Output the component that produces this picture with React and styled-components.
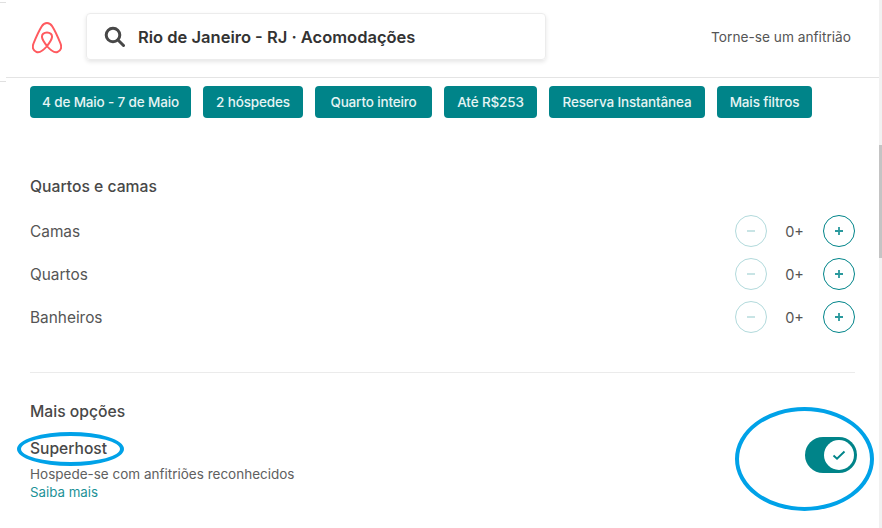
import React from 'react'
import styled, { createGlobalStyle } from 'styled-components'

const Global = createGlobalStyle`
  html, body {
    margin: 0;
    padding: 0;
    background: #fff;
    overflow: hidden;
  }
  body {
    font-family: "Inter", "Noto Sans", sans-serif;
    color: #484848;
  }
`

const Page = styled.div`
  position: relative;
  width: 882px;
  height: 528px;
  overflow: hidden;
  background: #fff;
`

const Header = styled.header`
  display: flex;
  align-items: center;
  height: 78px;
  margin-left: 6px;
  padding: 0 31px 4px 26px;
  box-sizing: border-box;
  border-bottom: 1px solid #e4e4e4;
`

const Logo = styled.svg`
  width: 30px;
  height: 32px;
  margin: 2px 24px 0 0;
  flex: none;
`

const SearchBox = styled.div`
  display: flex;
  align-items: center;
  gap: 13px;
  width: 460px;
  height: 47px;
  padding-left: 17px;
  box-sizing: border-box;
  border: 1px solid #ececec;
  border-radius: 4px;
  box-shadow: 0 2px 4px rgba(0, 0, 0, 0.1);
`

const SearchText = styled.span`
  font-size: 16.5px;
  font-weight: 600;
  color: #333;
  white-space: nowrap;
`

const HostLink = styled.a`
  margin: 1px 0 0 auto;
  font-size: 13.7px;
  color: #555;
`

const Filters = styled.div`
  display: flex;
  gap: 12px;
  padding: 8px 0 0 30px;
`

const Pill = styled.button`
  width: ${p => p.$w}px;
  height: 32px;
  padding: 0;
  border: 0;
  border-radius: 4px;
  background: #008489;
  color: #e6f4f4;
  font: 500 13.5px "Inter", sans-serif;
  letter-spacing: -0.15px;
  white-space: nowrap;
`

const Panel = styled.main`
  padding: 60px 27px 0 30px;
`

const SectionTitle = styled.h2`
  margin: 0;
  font-size: 15.7px;
  line-height: 18px;
  font-weight: 500;
  color: #484848;
`

const Rows = styled.div`
  display: flex;
  flex-direction: column;
  gap: 11px;
  margin-top: 19px;
  padding-bottom: 39px;
  border-bottom: 1px solid #ebebeb;
`

const Row = styled.div`
  display: flex;
  align-items: center;
  justify-content: space-between;
  height: 32px;
  font-size: 15.4px;
  color: #555;
`

const Stepper = styled.div`
  display: flex;
  align-items: center;
  width: 120px;
`

const RoundButton = styled.span`
  display: flex;
  align-items: center;
  justify-content: center;
  width: 32px;
  height: 32px;
  box-sizing: border-box;
  border-radius: 50%;
  border: 1px solid ${p => (p.$off ? '#b2dadc' : '#008489')};
  color: ${p => (p.$off ? '#b2dadc' : '#2a999d')};
`

const Count = styled.span`
  flex: 1;
  padding: 1px 1px 0 0;
  text-align: center;
  font-size: 14.5px;
  color: #555;
`

const OptionsTitle = styled(SectionTitle)`
  margin-top: 30px;
`

const Option = styled.div`
  display: flex;
  align-items: flex-start;
  justify-content: space-between;
  margin-top: 18px;
`

const OptionText = styled.div`
  display: flex;
  flex-direction: column;
`

const OptionName = styled.span`
  font-size: 15.6px;
  line-height: 20px;
  font-weight: 500;
  color: #484848;
`

const OptionHint = styled.span`
  margin-top: 6px;
  font-size: 13.5px;
  line-height: 18px;
  color: #606060;
`

const LearnMore = styled.a`
  font-size: 13.3px;
  line-height: 18px;
  color: #1c9297;
`

const Toggle = styled.span`
  display: flex;
  align-items: center;
  justify-content: flex-end;
  width: 52px;
  height: 36px;
  margin: -2px -2px 0 0;
  padding-right: 3px;
  box-sizing: border-box;
  border-radius: 18px;
  background: #008489;
  filter: blur(0.5px);
`

const Knob = styled.span`
  display: flex;
  align-items: center;
  justify-content: center;
  width: 30px;
  height: 30px;
  border-radius: 50%;
  background: #fff;
`

const Scrollbar = styled.div`
  position: absolute;
  top: 0;
  right: 0;
  bottom: 0;
  width: 3px;
  background: #f1f1f1;
`

const Thumb = styled.div`
  margin-top: 145px;
  height: 113px;
  background: #c4c4c4;
`

const Ring = styled.span`
  position: absolute;
  left: ${p => p.$x}px;
  top: ${p => p.$y}px;
  width: ${p => p.$w}px;
  height: ${p => p.$h}px;
  box-sizing: border-box;
  border: ${p => p.$t}px solid #00a2e8;
  border-radius: 50%;
`

const Stub = styled.span`
  position: absolute;
  left: 0;
  top: ${p => p.$y}px;
  width: 6px;
  height: 1px;
  background: #e0e0e0;
`

const pills = [
  ['4 de Maio - 7 de Maio', 161],
  ['2 hóspedes', 100],
  ['Quarto inteiro', 117],
  ['Até R$253', 93],
  ['Reserva Instantânea', 156],
  ['Mais filtros', 95],
]

const Minus = () => (
  <svg width="12" height="12" viewBox="0 0 12 12">
    <path d="M2 6h8" stroke="#c8e4e5" strokeWidth="2" />
  </svg>
)

const Plus = () => (
  <svg width="12" height="12" viewBox="0 0 12 12">
    <path d="M2 6h8M6 2v8" stroke="currentColor" strokeWidth="1.8" />
  </svg>
)

const StepRow = ({ label }) => (
  <Row>
    <span>{label}</span>
    <Stepper>
      <RoundButton $off><Minus /></RoundButton>
      <Count>0+</Count>
      <RoundButton><Plus /></RoundButton>
    </Stepper>
  </Row>
)

export default function App() {
  return (
    <Page>
      <Global />
      <Stub $y={2} />
      <Stub $y={81} />
      <Header>
        <Logo viewBox="0 0 30 32" fill="none" stroke="#ff5a5f" strokeWidth="2" strokeLinejoin="round">
          <path d="M15 24c-2.800-3.400-4.700-6.300-5-8.800-.3-2.800 1.800-4.700 5-4.700s5.300 1.900 5 4.700c-.3 2.500-2.200 5.400-5 8.800zm0 0c-3.200 4-7 7-10.500 6-3.400-1-4.500-4.700-3-8.500C3.500 16.500 6.500 9.500 9.800 4.200 11.200 2 12.800 1 15 1s3.800 1 5.200 3.200c3.300 5.300 6.300 12.300 8.300 17.300 1.500 3.800.4 7.500-3 8.500-3.500 1-7.300-2-10.500-6z" />
        </Logo>
        <SearchBox>
          <svg width="21" height="21" viewBox="0 0 21 21" fill="none" stroke="#484848" strokeWidth="3">
            <circle cx="9" cy="9" r="6.800" />
            <path d="M14 14l5.500 5.500" strokeLinecap="round" />
          </svg>
          <SearchText>Rio de Janeiro - RJ · Acomodações</SearchText>
        </SearchBox>
        <HostLink>Torne-se um anfitrião</HostLink>
      </Header>
      <Filters>
        {pills.map(([label, w]) => (
          <Pill key={label} $w={w}>{label}</Pill>
        ))}
      </Filters>
      <Panel>
        <SectionTitle>Quartos e camas</SectionTitle>
        <Rows>
          <StepRow label="Camas" />
          <StepRow label="Quartos" />
          <StepRow label="Banheiros" />
        </Rows>
        <OptionsTitle>Mais opções</OptionsTitle>
        <Option>
          <OptionText>
            <OptionName>Superhost</OptionName>
            <OptionHint>Hospede-se com anfitriões reconhecidos</OptionHint>
            <LearnMore>Saiba mais</LearnMore>
          </OptionText>
          <Toggle>
            <Knob>
              <svg width="16" height="16" viewBox="0 0 16 16" fill="none" stroke="#008489" strokeWidth="1.900">
                <path d="M2.500 8.500l3.500 3.200L13.500 4.500" />
              </svg>
            </Knob>
          </Toggle>
        </Option>
      </Panel>
      <Scrollbar><Thumb /></Scrollbar>
      <Ring $x={17} $y={432} $w={107} $h={34} $t={4} />
      <Ring $x={735} $y={407} $w={139} $h={104} $t={4} />
    </Page>
  )
}
